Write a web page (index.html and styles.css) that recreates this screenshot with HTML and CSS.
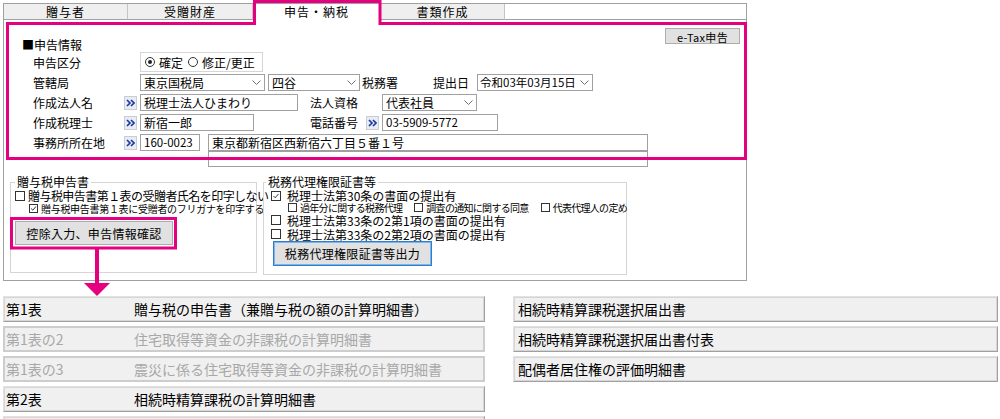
FILE: index.html
```html
<!DOCTYPE html>
<html lang="ja">
<head>
  <meta charset="UTF-8">
  <meta name="viewport" content="width=device-width, initial-scale=1">
  <title>申告・納税</title>
  <link rel="stylesheet" href="styles.css">
</head>
<body>
<div class="screen">
  <div class="window">
    <div class="tabs">
      <div class="tab t1">贈与者</div>
      <div class="tab t2">受贈財産</div>
      <div class="tab t3 active">申告・納税</div>
      <div class="tab t4">書類作成</div>
      <div class="tab-fill"></div>
    </div>

    <div class="panel">
      <div class="form">
        <div class="head">
          <div class="heading">■申告情報</div>
          <button type="button" class="btn etax">e-Tax申告</button>
        </div>

        <div class="row kbn">
          <span class="label">申告区分</span>
          <span class="slot"></span>
          <div class="radios">
            <span class="radio on"></span><span class="rtext">確定</span>
            <span class="radio"></span><span class="rtext">修正/更正</span>
          </div>
        </div>

        <div class="row kyoku">
          <span class="label">管轄局</span>
          <span class="slot"></span>
          <div class="sel w-kyoku">東京国税局<svg class="chev" viewBox="0 0 9 5"><path d="M0.5 0.5 L4.5 4.5 L8.5 0.5"/></svg></div>
          <div class="sel w-sho">四谷<svg class="chev" viewBox="0 0 9 5"><path d="M0.5 0.5 L4.5 4.5 L8.5 0.5"/></svg></div>
          <span class="txt zeimusho">税務署</span>
          <span class="txt teishutsu">提出日</span>
          <div class="sel w-date num">令和03年03月15日<svg class="chev" viewBox="0 0 9 5"><path d="M0.5 0.5 L4.5 4.5 L8.5 0.5"/></svg></div>
        </div>

        <div class="row">
          <span class="label">作成法人名</span>
          <span class="slot go"><svg viewBox="0 0 9 8"><path d="M1 1 L4 4 L1 7 M5 1 L8 4 L5 7"/></svg></span>
          <div class="inp w-hojin">税理士法人ひまわり</div>
          <span class="txt shikaku">法人資格</span>
          <div class="sel w-shikaku">代表社員<svg class="chev" viewBox="0 0 9 5"><path d="M0.5 0.5 L4.5 4.5 L8.5 0.5"/></svg></div>
        </div>

        <div class="row">
          <span class="label">作成税理士</span>
          <span class="slot go"><svg viewBox="0 0 9 8"><path d="M1 1 L4 4 L1 7 M5 1 L8 4 L5 7"/></svg></span>
          <div class="inp w-zeirishi">新宿一郎</div>
          <span class="txt denwa">電話番号</span>
          <span class="slot go"><svg viewBox="0 0 9 8"><path d="M1 1 L4 4 L1 7 M5 1 L8 4 L5 7"/></svg></span>
          <div class="inp w-tel num">03-5909-5772</div>
        </div>

        <div class="row">
          <span class="label">事務所所在地</span>
          <span class="slot go"><svg viewBox="0 0 9 8"><path d="M1 1 L4 4 L1 7 M5 1 L8 4 L5 7"/></svg></span>
          <div class="inp w-zip num">160-0023</div>
          <div class="inp w-addr">東京都新宿区西新宿六丁目５番１号</div>
        </div>
        <div class="row addr2">
          <div class="inp w-addr"></div>
        </div>
      </div>

      <div class="groups">
        <fieldset class="fs-left">
          <legend>贈与税申告書</legend>
          <div class="opt opt-main">
            <span class="chk"></span>贈与税申告書第１表の受贈者氏名を印字しない
          </div>
          <div class="opt opt-sub">
            <span class="chk small"><svg viewBox="0 0 8 8"><path d="M1.3 4 L3.2 5.9 L6.8 1.8"/></svg></span>贈与税申告書第１表に受贈者のフリガナを印字する
          </div>
          <button type="button" class="btn kojo">控除入力、申告情報確認</button>
        </fieldset>

        <fieldset class="fs-right">
          <legend>税務代理権限証書等</legend>
          <div class="opt r1">
            <span class="chk"><svg viewBox="0 0 10 10"><path d="M1.8 5 L4 7.2 L8.2 2.4"/></svg></span>税理士法第30条の書面の提出有
          </div>
          <div class="opt r-sub">
            <span class="chk small"></span>過年分に関する税務代理
            <span class="chk small gapl"></span>調査の通知に関する同意
            <span class="chk small gapl"></span>代表代理人の定め
          </div>
          <div class="opt r3">
            <span class="chk"></span>税理士法第33条の2第1項の書面の提出有
          </div>
          <div class="opt r4">
            <span class="chk"></span>税理士法第33条の2第2項の書面の提出有
          </div>
          <button type="button" class="btn shoumei">税務代理権限証書等出力</button>
        </fieldset>
      </div>
    </div>
  </div>

  <div class="lists">
    <div class="list left">
      <div class="item"><span class="no">第1表</span><span>贈与税の申告書（兼贈与税の額の計算明細書）</span></div>
      <div class="item off"><span class="no">第1表の2</span><span>住宅取得等資金の非課税の計算明細書</span></div>
      <div class="item off"><span class="no">第1表の3</span><span>震災に係る住宅取得等資金の非課税の計算明細書</span></div>
      <div class="item"><span class="no">第2表</span><span>相続時精算課税の計算明細書</span></div>
      <div class="item"><span class="no"></span><span></span></div>
    </div>
    <div class="list right">
      <div class="item">相続時精算課税選択届出書</div>
      <div class="item">相続時精算課税選択届出書付表</div>
      <div class="item">配偶者居住権の評価明細書</div>
    </div>
  </div>

  <!-- 注釈（ピンクの枠と矢印） -->
  <svg class="marks" viewBox="0 0 1000 419">
    <path class="mark-line" d="M7.5 158.5 V23.5 H254.5 V1.5 H380 V23.5 H745.5 V158.5 Z"/>
    <rect class="mark-line" x="11.5" y="218.5" width="164" height="29.5"/>
    <path class="mark-line arrow-stem" d="M97 249 V285"/>
    <polygon class="mark-fill" points="84,283 110,283 97,296"/>
  </svg>
</div>
</body>
</html>
```

FILE: styles.css
```css
* { box-sizing: border-box; }
body { margin: 0; background: #fff; color: #000; font-family: "Noto Sans CJK JP", "Noto Sans", sans-serif; font-size: 12px; }
.screen { position: relative; width: 1000px; height: 419px; overflow: hidden; }

/* ウィンドウとタブ */
.window { margin: 3px 0 0 3px; width: 744px; height: 278px; border: 1px solid #a0a0a0; background: #fff; overflow: hidden; }
.tabs { display: flex; height: 16px; }
.tab { height: 16px; background: #efefef; border-right: 1px solid #c4c4c4; border-bottom: 1px solid #a0a0a0; text-align: center; line-height: 15px; letter-spacing: 1px; }
.t1 { width: 124px; }
.t2 { width: 125px; }
.t3 { width: 128px; }
.t4 { width: 124px; }
.tab.active { background: #fff; border-bottom-color: #fff; }
.tab-fill { flex: 1; height: 16px; background: #fff; border-bottom: 1px solid #a0a0a0; }

.panel { padding-top: 8px; }
.form { padding: 0 6px 0 18px; }
.head { display: flex; justify-content: space-between; height: 24px; }
.heading { align-self: flex-end; height: 14px; line-height: 14px; }

/* 入力行 */
.row { display: flex; align-items: center; height: 17px; margin-top: 3px; padding-left: 11px; white-space: nowrap; line-height: 15px; }
.row.kbn { height: 20px; margin-top: 0; }
.row.kyoku { margin-top: 2px; }
.row.addr2 { height: 16px; margin-top: 0; padding-left: 186px; }
.label { width: 91px; flex: none; }
.slot { width: 13px; height: 14px; margin-right: 3px; flex: none; }
.go { display: flex; align-items: center; justify-content: center; background: #e9ecf3; border: 1px solid #c9ccd4; }
.go svg { width: 9px; height: 8px; }
.go path { fill: none; stroke: #1c3aa6; stroke-width: 1.7; }

.radios { display: flex; align-items: center; width: 123px; height: 20px; border: 1px solid #d6d6d6; padding-left: 4px; }
.radio { width: 10px; height: 10px; border: 1px solid #333; border-radius: 50%; background: #fff; flex: none; position: relative; }
.radio.on::after { content: ""; position: absolute; left: 2px; top: 2px; width: 4px; height: 4px; border-radius: 50%; background: #222; }
.rtext { margin: 0 5px 0 4px; }

.inp, .sel { height: 17px; border: 1px solid #a0a0a0; background: #fff; display: flex; align-items: center; padding: 0 3px; flex: none; overflow: hidden; }
.sel { justify-content: space-between; padding-right: 3px; }
.chev { width: 9px; height: 5px; flex: none; }
.chev path { fill: none; stroke: #707070; stroke-width: 1; }
.num { font-size: 11.5px; }

.w-kyoku { width: 125px; }
.w-sho { width: 92px; margin-left: 3px; }
.zeimusho { margin-left: 2px; }
.teishutsu { margin-left: 35px; }
.w-date { width: 116px; margin-left: 8px; padding-left: 2px; }
.w-hojin { width: 158px; }
.shikaku { margin-left: 12px; }
.w-shikaku { width: 95px; margin-left: 24px; }
.w-zeirishi { width: 114px; }
.denwa { margin-left: 56px; margin-right: 8px; }
.w-tel { width: 116px; }
.w-zip { width: 60px; }
.w-addr { width: 440px; margin-left: 8px; }
.addr2 .w-addr { height: 16px; margin-left: 0; }

/* 下段のグループ */
.groups { display: flex; margin-top: 8px; padding-left: 6px; }
fieldset { margin: 0; padding: 0 4px; border: 1px solid #d5d5d5; min-width: 0; }
legend { padding: 0 2px; line-height: 14px; }
.fs-left { width: 247px; height: 98px; }
.fs-right { width: 364px; height: 100px; margin-left: 6px; padding-left: 7px; }
.fs-right legend { margin-left: -5px; }

.opt { display: flex; align-items: center; white-space: nowrap; line-height: 11px; }
.chk { width: 10px; height: 10px; border: 1px solid #333; background: #fff; flex: none; display: flex; }
.chk svg { width: 100%; height: 100%; }
.chk path { fill: none; stroke: #222; stroke-width: 1.1; }
.chk.small { width: 9px; height: 9px; }
.opt-main { height: 13px; letter-spacing: -0.55px; }
.opt-main .chk { margin-right: 3px; }
.opt-sub { height: 13px; padding-left: 14px; font-size: 10px; letter-spacing: -0.3px; line-height: 10px; }
.opt-sub .chk { margin-right: 3px; }
.r1 { height: 13px; }
.r3, .r4 { height: 14px; }
.r1 .chk, .r3 .chk, .r4 .chk { margin-right: 6px; }
.r-sub { height: 11px; padding-left: 17px; font-size: 10px; letter-spacing: -0.7px; line-height: 10px; }
.r-sub .chk { margin-right: 3px; }
.r-sub .gapl { margin-left: 12px; }

.btn { font-family: inherit; font-size: 12px; color: #000; background: #e1e1e1; border: 1px solid #adadad; padding: 0; cursor: pointer; letter-spacing: 0.3px; }
.etax { width: 75px; height: 16px; font-size: 11px; }
.kojo { width: 158px; height: 24px; margin-top: 6px; }
.shoumei { width: 159px; height: 25px; margin-left: 2px; border: 1px solid #2a7fd0; box-shadow: inset 0 0 0 1px #7fb4e6; }

/* 帳票一覧 */
.lists { display: flex; margin: 15px 0 0 3px; }
.list { display: flex; flex-direction: column; gap: 4px; }
.list.left { width: 482px; }
.list.right { width: 485px; margin-left: 28px; }
.item { height: 26px; display: flex; align-items: center; flex: none; background: #f0f0f0; border: 1px solid; border-color: #e2e2e2 #a0a0a0 #a0a0a0 #e2e2e2; box-shadow: inset 0 0 0 1px #d6d6d6; font-size: 14px; padding-left: 2px; white-space: nowrap; line-height: 20px; }
.list.right .item { padding-left: 4px; }
.no { width: 128px; flex: none; }
.item.off { color: #a8a8a8; border: 2px solid #cdcdcd; box-shadow: none; padding-left: 1px; }

/* 注釈 */
.marks { position: absolute; left: 0; top: 0; width: 1000px; height: 419px; pointer-events: none; }
.mark-line { fill: none; stroke: #e4007f; stroke-width: 3; }
.arrow-stem { stroke-width: 4; }
.mark-fill { fill: #e4007f; }
```
